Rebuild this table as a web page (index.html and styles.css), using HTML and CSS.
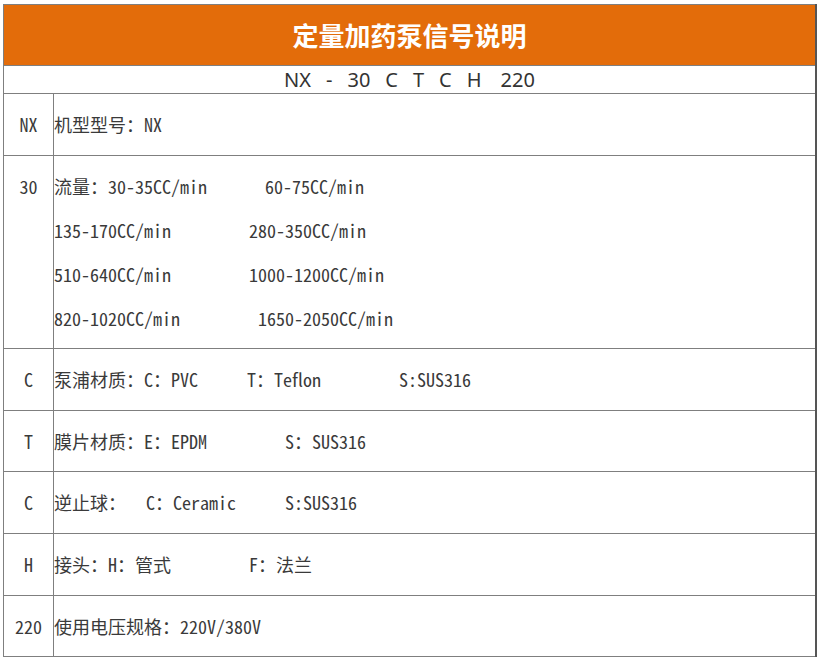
FILE: index.html
```html
<!DOCTYPE html>
<html lang="zh-CN">
<head>
<meta charset="utf-8">
<title>定量加药泵信号说明</title>
<link rel="stylesheet" href="styles.css">
</head>
<body>
<table class="spec">
  <tr class="title-row">
    <td colspan="2" class="title">定量加药泵信号说明</td>
  </tr>
  <tr class="code-row">
    <td colspan="2" class="code">
      <div class="code-items"><span>NX</span><span>-</span><span>30</span><span>C</span><span>T</span><span>C</span><span>H</span><span class="wide">220</span></div>
    </td>
  </tr>
  <tr>
    <td class="key">NX</td>
    <td class="val">机型型号：NX</td>
  </tr>
  <tr>
    <td class="key">30</td>
    <td class="val">
      <div>流量：30-35CC/min<span class="g58">60-75CC/min</span></div>
      <div>135-170CC/min<span class="g78">280-350CC/min</span></div>
      <div>510-640CC/min<span class="g78">1000-1200CC/min</span></div>
      <div>820-1020CC/min<span class="g78">1650-2050CC/min</span></div>
    </td>
  </tr>
  <tr>
    <td class="key">C</td>
    <td class="val">泵浦材质：C：PVC<span class="g49">T：Teflon</span><span class="g78">S:SUS316</span></td>
  </tr>
  <tr>
    <td class="key">T</td>
    <td class="val">膜片材质：E：EPDM<span class="g78">S：SUS316</span></td>
  </tr>
  <tr>
    <td class="key">C</td>
    <td class="val">逆止球：<span class="g20">C：Ceramic</span><span class="g49">S:SUS316</span></td>
  </tr>
  <tr>
    <td class="key">H</td>
    <td class="val">接头：H：管式<span class="g78">F：法兰</span></td>
  </tr>
  <tr>
    <td class="key">220</td>
    <td class="val">使用电压规格：220V/380V</td>
  </tr>
</table>
</body>
</html>
```

FILE: styles.css
```css
html, body {
  margin: 0;
  padding: 0;
  background: #ffffff;
}

.spec {
  margin: 4px 0 0 3px;
  width: 814px;
  border-collapse: collapse;
  border: 1px solid #7f7f7f;
  border-right: 2px solid #555555;
  font-family: "Noto Sans CJK SC", sans-serif;
  color: #3a3a3a;
}

.spec td {
  border: 1px solid #7f7f7f;
  padding: 0;
}

.title {
  height: 60px;
  background: #e36c0a;
  color: #ffffff;
  font-size: 26px;
  font-weight: 700;
  text-align: center;
  line-height: 58px;
}

.code {
  height: 27px;
  text-align: center;
  font-family: "Noto Sans", "Noto Sans CJK SC", sans-serif;
  font-size: 20px;
  line-height: 27px;
  color: #333333;
}

.code-items {
  display: flex;
  justify-content: center;
  gap: 15px;
}

.code-items .wide {
  margin-left: 4px;
}

.spec td.key,
.spec td.val {
  padding: 8px 0 8.6px;
  line-height: 44px;
  font-size: 18px;
  font-feature-settings: "hwid";
}

.key {
  width: 49px;
  text-align: center;
  vertical-align: top;
}

.spec td.val {
  white-space: nowrap;
  vertical-align: top;
}

.g20 { margin-left: 20px; }
.g49 { margin-left: 49px; }
.g58 { margin-left: 58px; }
.g78 { margin-left: 78px; }
```
